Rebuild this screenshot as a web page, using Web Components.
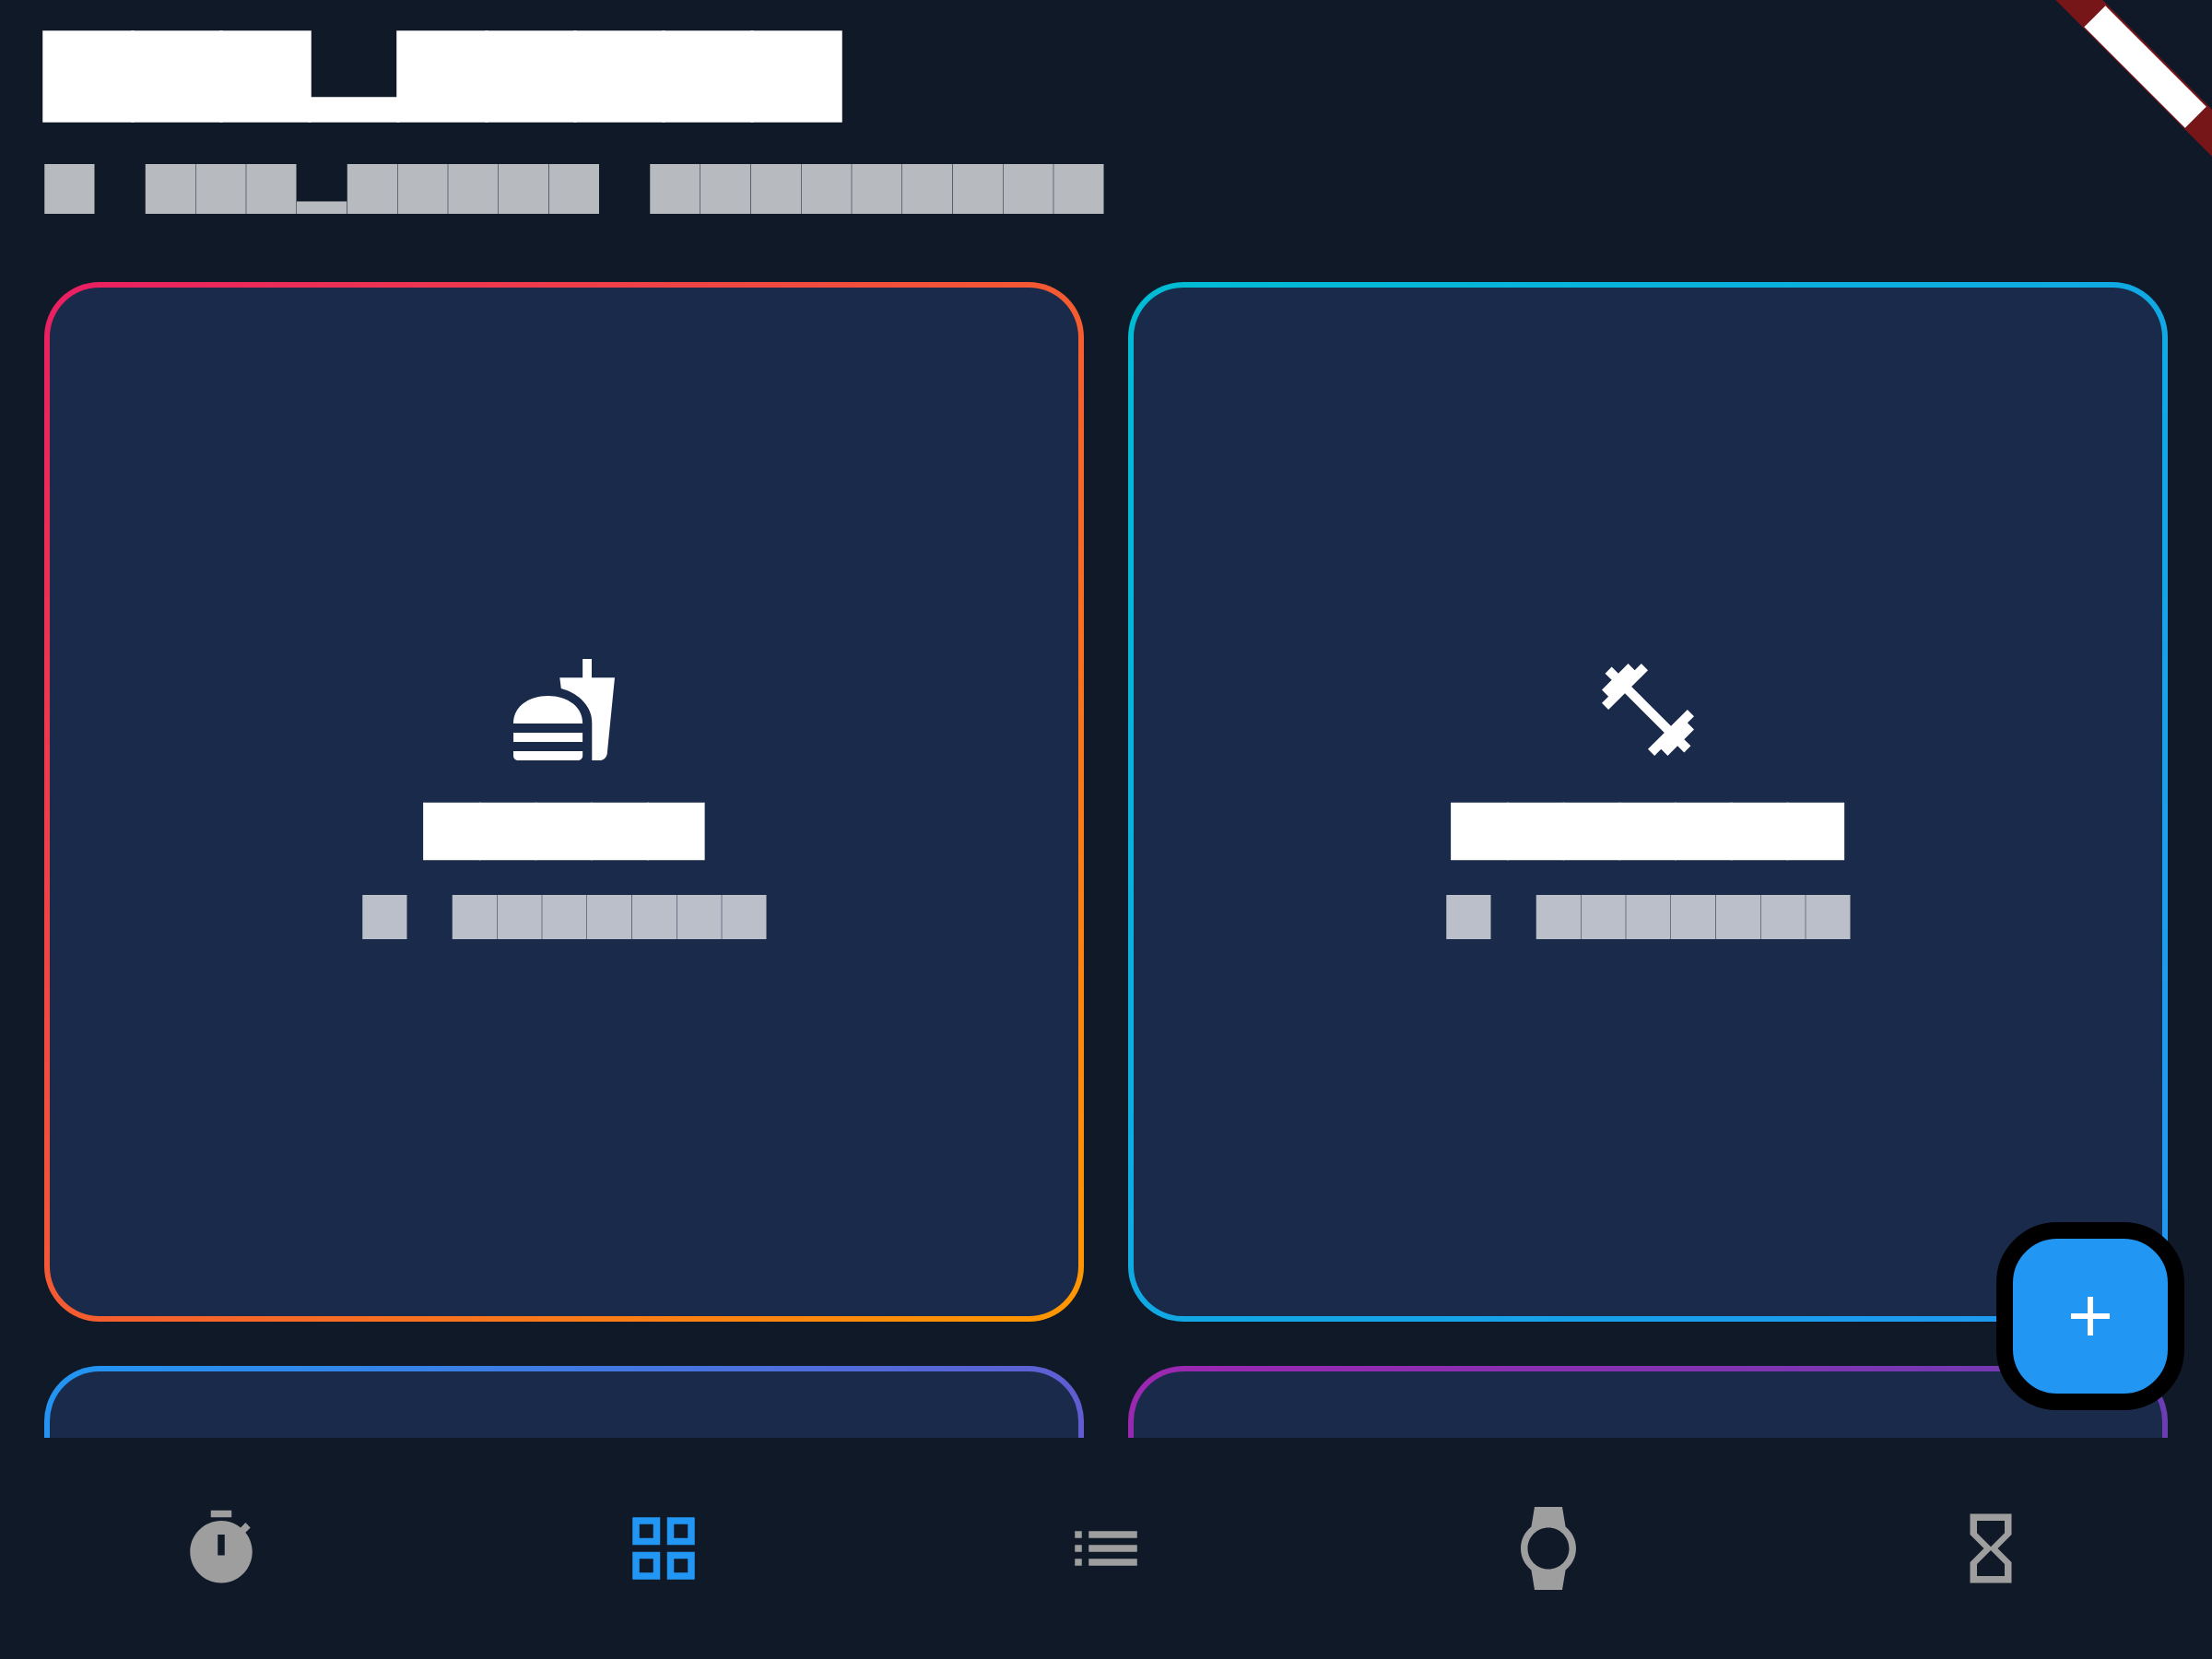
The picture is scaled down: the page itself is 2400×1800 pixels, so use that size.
<!DOCTYPE html>
<html lang="en">
<head>
<meta charset="utf-8">
<meta name="viewport" content="width=device-width, initial-scale=1">
<title>Templates</title>
<style>
  html, body { margin: 0; height: 100%; background: #101927; }
  body { font-family: Roboto, "Liberation Sans", sans-serif; }
</style>
</head>
<body>
<app-shell>
  <app-header slot="header">
    <block-text slot="title" pattern="xxxpxxxxx" size="96" bold="14"></block-text>
    <block-text slot="subtitle" pattern="x xxxpxxxxx xxxxxxxxx" size="54" spacing="3"></block-text>
  </app-header>

  <template-card style="--from:#e91e63;--to:#ff9800">
    <svg-icon slot="icon" name="fastfood"></svg-icon>
    <block-text slot="title" pattern="xxxxx" size="60" spacing="3" bold="10"></block-text>
    <block-text slot="subtitle" pattern="x xxxxxxx" size="48" spacing="3"></block-text>
  </template-card>
  <template-card style="--from:#00bcd4;--to:#2196f3">
    <svg-icon slot="icon" name="fitness"></svg-icon>
    <block-text slot="title" pattern="xxxxxxx" size="60" spacing="3" bold="10"></block-text>
    <block-text slot="subtitle" pattern="x xxxxxxx" size="48" spacing="3"></block-text>
  </template-card>
  <template-card style="--from:#2196f3;--to:#9c27b0"></template-card>
  <template-card style="--from:#9c27b0;--to:#3f51b5"></template-card>

  <add-button slot="action"></add-button>

  <nav-bar slot="nav">
    <nav-item icon="timer" label="Timer"></nav-item>
    <nav-item icon="grid" label="Templates" selected></nav-item>
    <nav-item icon="list" label="List"></nav-item>
    <nav-item icon="watch" label="Watch"></nav-item>
    <nav-item icon="hourglass" label="Hourglass"></nav-item>
  </nav-bar>
  <corner-banner slot="banner"></corner-banner>
</app-shell>

<script>
const ICONS = {
  fastfood: 'M18.06 22.99h1.66c.84 0 1.53-.64 1.63-1.46L23 5.05h-5V1h-1.97v4.05h-4.97l.3 2.34c1.71.47 3.31 1.32 4.27 2.26 1.44 1.42 2.43 2.89 2.43 5.29v8.05zM1 21.99V21h15.03v.99c0 .55-.45 1-1.01 1H2.01c-.56 0-1.01-.45-1.01-1zm15.03-7c0-8-15.03-8-15.03 0h15.03zM1.02 17h15v2h-15z',
  fitness: 'M20.57 14.86L22 13.43 20.57 12 17 15.57 8.43 7 12 3.43 10.57 2 9.14 3.43 7.71 2 5.57 4.14 4.14 2.71 2.71 4.14l1.43 1.43L2 7.71l1.43 1.43L2 10.57 3.43 12 7 8.43 15.57 17 12 20.57 13.43 22l1.43-1.43L16.29 22l2.14-2.14 1.43 1.43 1.43-1.43-1.43-1.43L22 16.29z',
  timer: 'M15 1H9v2h6V1zm4.03 6.39 1.42-1.42-1.41-1.41-1.42 1.42C16.07 4.74 14.12 4 12 4c-4.97 0-9 4.03-9 9s4.02 9 9 9 9-4.03 9-9c0-2.12-.74-4.07-1.97-5.61zM13 14h-2V8h2v6z',
  grid: 'M3 3v8h8V3H3zm6 6H5V5h4v4zm-6 4v8h8v-8H3zm6 6H5v-4h4v4zm4-16v8h8V3h-8zm6 6h-4V5h4v4zm-6 4v8h8v-8h-8zm6 6h-4v-4h4v4z',
  list: 'M3 13h2v-2H3v2zm0 4h2v-2H3v2zm0-8h2V7H3v2zm4 4h14v-2H7v2zm0 4h14v-2H7v2zM7 7v2h14V7H7z',
  watch: 'M20 12c0-2.54-1.19-4.81-3.04-6.27L16 0H8l-.95 5.73C5.19 7.19 4 9.45 4 12s1.19 4.81 3.05 6.27L8 24h8l.96-5.73C18.81 16.81 20 14.54 20 12zM6 12c0-3.31 2.69-6 6-6s6 2.69 6 6-2.69 6-6 6-6-2.69-6-6z',
  hourglass: 'M6 2v6l4 4-4 4v6h12v-6l-4-4 4-4V2H6zm10 14.5V20H8v-3.5l4-4 4 4zm-4-5l-4-4V4h8v3.5l-4 4z',
  add: 'M19 13h-6v6h-2v-6H5v-2h6V5h2v6h6v2z'
};

class Base extends HTMLElement {
  connectedCallback() {
    if (!this.shadowRoot) this.attachShadow({ mode: 'open' }).innerHTML = this.render();
  }
}

customElements.define('svg-icon', class extends Base {
  render() {
    return `<style>
      :host { display: block; width: var(--icon-size, 120px); height: var(--icon-size, 120px); }
      svg { display: block; width: 100%; height: 100%; fill: currentColor; }
    </style>
    <svg viewBox="0 0 24 24" aria-hidden="true"><path fill-rule="evenodd" d="${ICONS[this.getAttribute('name')]}"/></svg>`;
  }
});

/* A run of em-square blocks: x = full block, p = descender block, space = blank.
   Drawn in eighth-pixel units. The spacing and bold attributes are in quarter
   pixels: spacing is split on both sides of each block, bold is outline width.
   Blocks are one unit wider on each side, which softens the seams. */
customElements.define('block-text', class extends Base {
  render() {
    const size = Number(this.getAttribute('size'));
    const spacing = Number(this.getAttribute('spacing') || 0) * 2;
    const bold = Number(this.getAttribute('bold') || 0) * 2;
    const em = size * 8;
    const pitch = em + spacing;
    const bleed = bold ? 0 : 1;
    const chars = [...this.getAttribute('pattern')];
    const rects = chars.map((c, i) => {
      if (c === ' ') return '';
      const top = c === 'p' ? em * 3 / 4 : 0;
      return `<rect x="${i * pitch + spacing / 2 - bleed}" y="${top}" width="${em + 2 * bleed}" height="${em - top}"/>`;
    }).join('');
    return `<style>
      :host { display: block; }
      svg { display: block; height: ${size}px; overflow: visible; fill: currentColor; stroke: currentColor; }
    </style>
    <svg viewBox="0 0 ${chars.length * pitch} ${em}" stroke-width="${bold}" aria-hidden="true">${rects}</svg>`;
  }
});

customElements.define('app-header', class extends Base {
  render() {
    return `<style>
      :host { display: block; }
      header { display: flex; flex-direction: column; align-items: flex-start; gap: 47px; padding: 35px 48px 26px; }
      ::slotted([slot=title]) { color: #fff; }
      ::slotted([slot=subtitle]) { color: #b7babe; }
    </style>
    <header><slot name="title"></slot><slot name="subtitle"></slot></header>`;
  }
});

customElements.define('template-card', class extends Base {
  render() {
    return `<style>
      :host { display: block; box-sizing: border-box; aspect-ratio: 1; padding: 6px; border-radius: 60px;
        background: linear-gradient(135deg, var(--from), var(--to)); }
      article { box-sizing: border-box; height: 100%; border-radius: 54px; background: #1a2a4a; padding-bottom: 11px;
        display: flex; flex-direction: column; align-items: center; justify-content: center; color: #fff; }
      ::slotted([slot=title]) { margin: 42px 0 39px; }
      ::slotted([slot=subtitle]) { color: #babfc9; }
    </style>
    <article><slot name="icon"></slot><slot name="title"></slot><slot name="subtitle"></slot></article>`;
  }
});

customElements.define('add-button', class extends Base {
  render() {
    return `<style>
      :host { display: block; --icon-size: 72px; }
      button { box-sizing: border-box; width: 204px; height: 204px; padding: 0; border: 18px solid #000; border-radius: 66px;
        background: #2196f3; color: #fff; display: flex; align-items: center; justify-content: center; }
    </style>
    <button type="button" aria-label="Add"><svg-icon name="add"></svg-icon></button>`;
  }
});

customElements.define('nav-bar', class extends Base {
  render() {
    return `<style>
      :host { display: block; }
      nav { display: flex; height: 240px; background: #101927; }
      ::slotted(*) { flex: 1; }
    </style>
    <nav><slot></slot></nav>`;
  }
});

customElements.define('nav-item', class extends Base {
  render() {
    return `<style>
      :host { display: flex; --icon-size: 90px; color: #9e9e9e; }
      :host([selected]) { color: #2196f3; }
      button { flex: 1; display: flex; align-items: center; justify-content: center; padding: 0; border: 0; background: none; color: inherit; }
    </style>
    <button type="button" aria-label="${this.getAttribute('label')}"><svg-icon name="${this.getAttribute('icon')}"></svg-icon></button>`;
  }
});

customElements.define('corner-banner', class extends Base {
  render() {
    return `<style>
      :host { display: block; pointer-events: none; }
      svg { display: block; width: 170px; height: 170px; }
    </style>
    <svg viewBox="0 0 170 170" aria-hidden="true"><g transform="translate(170 0) rotate(45)">
      <rect x="-121" y="84" width="242" height="36" fill="#761619"/>
      <rect x="-77.3" y="86.2" width="154.8" height="32.6" fill="#fff"/>
    </g></svg>`;
  }
});

customElements.define('app-shell', class extends Base {
  render() {
    return `<style>
      :host { display: flex; flex-direction: column; height: 100vh; position: relative; overflow: hidden; background: #101927; }
      main { flex: 1; min-height: 0; position: relative; overflow: hidden; }
      .grid { display: grid; grid-template-columns: 1fr 1fr; gap: 48px; padding: 48px; }
      .action { position: absolute; right: 30px; bottom: 30px; }
      .banner { position: absolute; right: 0; top: 0; }
    </style>
    <main>
      <slot name="header"></slot>
      <section class="grid"><slot></slot></section>
      <div class="action"><slot name="action"></slot></div>
    </main>
    <slot name="nav"></slot>
    <div class="banner"><slot name="banner"></slot></div>`;
  }
});
</script>
</body>
</html>
